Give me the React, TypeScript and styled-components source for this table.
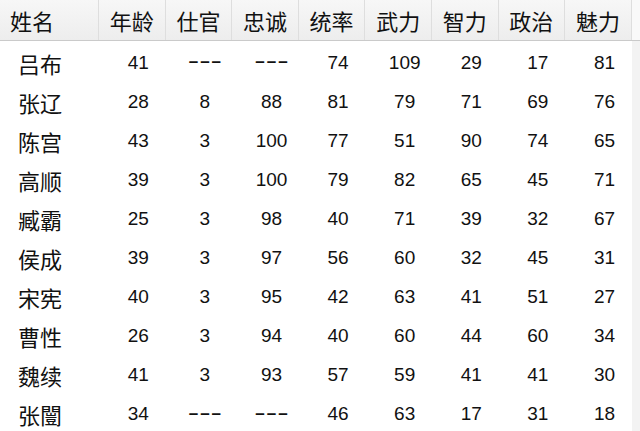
import React from 'react';
import styled, { createGlobalStyle } from 'styled-components';

const GlobalStyle = createGlobalStyle`
	html, body {
		margin: 0;
		padding: 0;
		background: #ffffff;
	}
`;

const headers = ['姓名', '年龄', '仕官', '忠诚', '统率', '武力', '智力', '政治', '魅力'];

const rows: [string, ...(number | null)[]][] = [
	['吕布', 41, null, null, 74, 109, 29, 17, 81],
	['张辽', 28, 8, 88, 81, 79, 71, 69, 76],
	['陈宫', 43, 3, 100, 77, 51, 90, 74, 65],
	['高顺', 39, 3, 100, 79, 82, 65, 45, 71],
	['臧霸', 25, 3, 98, 40, 71, 39, 32, 67],
	['侯成', 39, 3, 97, 56, 60, 32, 45, 31],
	['宋宪', 40, 3, 95, 42, 63, 41, 51, 27],
	['曹性', 26, 3, 94, 40, 60, 44, 60, 34],
	['魏续', 41, 3, 93, 57, 59, 41, 41, 30],
	['张闓', 34, null, null, 46, 63, 17, 31, 18]
];

const App: React.FC = () => (
	<>
		<GlobalStyle />
		<StyledTable>
			<StyledHeaderRow>
				{headers.map((title, i) => (
					<StyledHeaderCell key={title} first={i === 0}>
						{title}
					</StyledHeaderCell>
				))}
				<StyledHeaderFiller />
			</StyledHeaderRow>
			{rows.map(([name, ...values]) => (
				<StyledRow key={name}>
					<StyledNameCell>{name}</StyledNameCell>
					{values.map((value, i) =>
						value === null ? (
							<StyledValueCell key={i}>
								<StyledDash>–––</StyledDash>
							</StyledValueCell>
						) : (
							<StyledValueCell key={i}>{value}</StyledValueCell>
						)
					)}
					<StyledFiller />
				</StyledRow>
			))}
		</StyledTable>
	</>
);

export default App;

const columns = '99px repeat(8, 66.6px) 1fr';

const StyledTable = styled.div`
	width: 640px;
	height: 431px;
	overflow: hidden;
	background: #ffffff;
	color: #111111;
`;

const StyledHeaderRow = styled.div`
	display: grid;
	grid-template-columns: ${columns};
	height: 40px;
	background: linear-gradient(#f7f7f7, #ededed);
	border-bottom: 1px solid #cacaca;
`;

interface StyledHeaderCellProps {
	first?: boolean;
}

const StyledHeaderCell = styled.div<StyledHeaderCellProps>`
	display: flex;
	align-items: center;
	justify-content: ${({ first }) => (first ? 'flex-start' : 'center')};
	padding-left: ${({ first }) => (first ? '10px' : '0')};
	border-right: 1px solid #dedede;
	font-family: 'Noto Sans CJK SC', 'Noto Sans', sans-serif;
	font-size: 22px;
	line-height: 1;
	padding-bottom: 1px;
`;

const StyledHeaderFiller = styled.div`
	background: #f9f9f9;
`;

const StyledRow = styled.div`
	display: grid;
	grid-template-columns: ${columns};
	height: 39.1px;
`;

const StyledNameCell = styled.div`
	display: flex;
	align-items: center;
	padding: 4px 0 0 18px;
	font-family: 'Noto Sans CJK SC', 'Noto Sans', sans-serif;
	font-size: 22px;
	line-height: 1;
`;

const StyledValueCell = styled.div`
	display: flex;
	align-items: center;
	justify-content: center;
	padding: 3px 0 0 12px;
	font-family: 'Liberation Sans', Arial, sans-serif;
	font-size: 19px;
	line-height: 1;
`;

const StyledDash = styled.span`
	font-family: 'DejaVu Sans Mono', monospace;
	font-size: 14px;
	font-weight: bold;
	letter-spacing: 3px;
	margin-right: -3px;
	margin-bottom: 2px;
`;

const StyledFiller = styled.div`
	background: #f3f3f3;
`;
